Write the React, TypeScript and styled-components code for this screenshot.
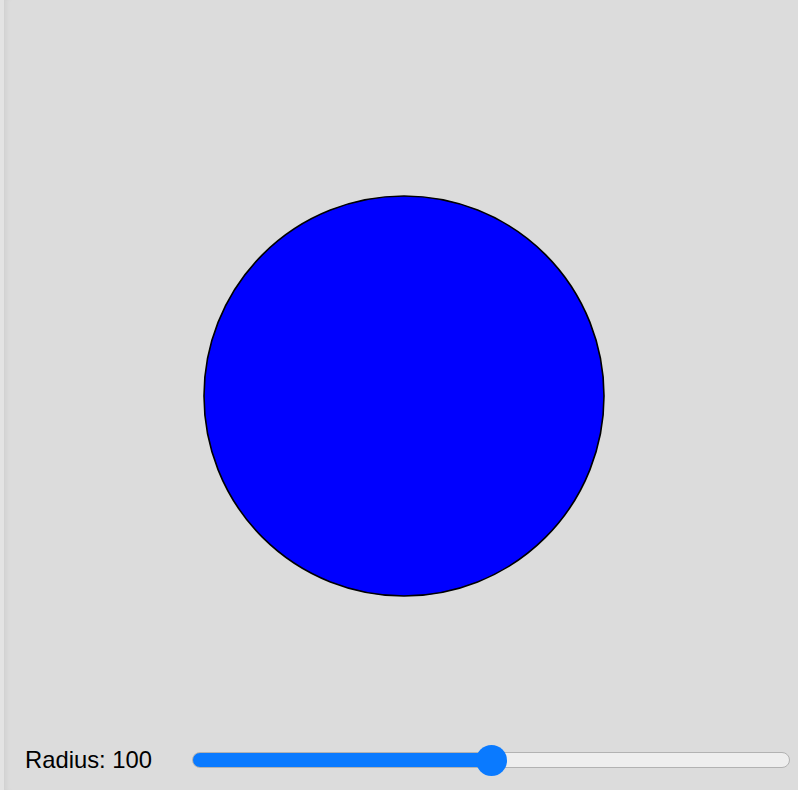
import React, { useState } from "react";
import styled, { createGlobalStyle } from "styled-components";

const Global = createGlobalStyle`
  html, body { margin: 0; padding: 0; background: #dcdcdc; }
  body { font-family: "Liberation Sans", Arial, sans-serif; }
`;

const Frame = styled.div`
  display: flex;
  width: 798px;
  height: 790px;
  overflow: hidden;
`;

const EdgeStrip = styled.div`
  width: 4px;
  flex: none;
  background: #e3e3e3;
`;

const Main = styled.div`
  flex: 1;
  display: flex;
  flex-direction: column;
  background: #dcdcdc;
  box-shadow: inset 6px 0 6px -5px rgba(0, 0, 0, 0.08);
`;

const Stage = styled.div`
  height: 740px;
  display: flex;
  justify-content: center;
  align-items: flex-start;
  padding-top: 194px;
  padding-left: 6px;
  box-sizing: border-box;
`;

const Controls = styled.div`
  flex: 1;
  display: flex;
  align-items: center;
  padding: 0 8px 0 21px;
  gap: 40px;
  margin-top: -10px;
`;

const Label = styled.span`
  font-size: 23.8px;
  color: #000;
  white-space: nowrap;
  width: 127px;
  flex: none;
`;

const Range = styled.input`
  -webkit-appearance: none;
  appearance: none;
  flex: 1;
  margin: 0;
  height: 32px;
  background: transparent;
  outline: none;

  &::-webkit-slider-runnable-track {
    height: 16px;
    border-radius: 8px;
    box-sizing: border-box;
    border: 1px solid #b2b2b2;
    background: linear-gradient(
      to right,
      #0a7aff 0%,
      #0a7aff var(--pct),
      #eeeeee var(--pct),
      #eeeeee 100%
    );
  }
  &::-webkit-slider-thumb {
    -webkit-appearance: none;
    appearance: none;
    width: 31px;
    height: 31px;
    border-radius: 50%;
    background: #0a7aff;
    border: none;
    margin-top: -8.5px;
  }
`;

export default function App() {
  const [r, setR] = useState(100);
  const min = 0;
  const max = 200;
  const pct = ((r - min) / (max - min)) * 100;
  return (
    <>
      <Global />
      <Frame>
        <EdgeStrip />
        <Main>
          <Stage>
            <svg width="404" height="404" viewBox="0 0 404 404">
              <circle cx="202" cy="202" r={r * 2} fill="#0000ff" stroke="#000" strokeWidth="1.6" />
            </svg>
          </Stage>
          <Controls>
            <Label>Radius: {r}</Label>
            <Range
              type="range"
              min={min}
              max={max}
              value={r}
              onChange={(e) => setR(Number(e.target.value))}
              style={{ ["--pct" as any]: `${pct}%` }}
            />
          </Controls>
        </Main>
      </Frame>
    </>
  );
}
